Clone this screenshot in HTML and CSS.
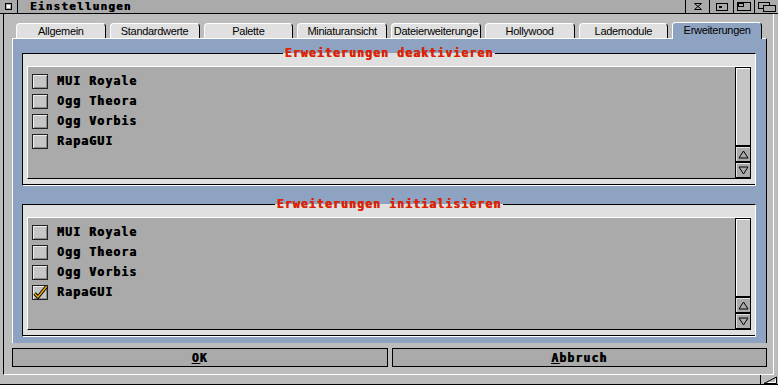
FILE: index.html
```html
<!DOCTYPE html>
<html lang="de">
<head>
    <meta charset="UTF-8">
    <title>Einstellungen</title>
    <link rel="stylesheet" href="styles.css">
</head>
<body>
    <div class="window">
        <div class="titlebar">
            <div class="close-gadget">
                <svg width="8" height="8" viewBox="0 0 8 8"><rect x="0.5" y="0.5" width="6" height="6" fill="#aaa" stroke="#000"/><rect x="2" y="2" width="3" height="3" fill="#fff"/></svg>
            </div>
            <div class="title">Einstellungen</div>
            <div class="gadgets">
                <div class="gadget">
                    <svg width="10" height="9" viewBox="0 0 10 9"><path d="M1.5 1.5 H8.5 L1.5 7.5 H8.5 L1.5 1.5" fill="none" stroke="#000"/></svg>
                </div>
                <div class="gadget">
                    <svg width="12" height="8" viewBox="0 0 12 8"><rect x="0.5" y="0.5" width="11" height="7" fill="none" stroke="#000"/><rect x="3" y="3" width="3" height="2" fill="#000"/></svg>
                </div>
                <div class="gadget narrow">
                    <svg width="14" height="9" viewBox="0 0 14 9"><rect x="0.5" y="0.5" width="13" height="8" fill="none" stroke="#000"/><rect x="1" y="1" width="6" height="4" fill="#000"/><rect x="2" y="2" width="4" height="2" fill="#aaa"/></svg>
                </div>
                <div class="gadget">
                    <svg width="18" height="10" viewBox="0 0 18 10"><rect x="0.5" y="0.5" width="11" height="6" fill="#aaa" stroke="#000"/><rect x="5.5" y="3.5" width="12" height="6" fill="#aaa" stroke="#000"/></svg>
                </div>
            </div>
        </div>

        <div class="main">
            <div class="tabs">
                <div class="tab">Allgemein</div>
                <div class="tab">Standardwerte</div>
                <div class="tab">Palette</div>
                <div class="tab">Miniaturansicht</div>
                <div class="tab">Dateierweiterunge</div>
                <div class="tab">Hollywood</div>
                <div class="tab">Lademodule</div>
                <div class="tab active">Erweiterungen</div>
            </div>

            <div class="panel">
                <fieldset class="group">
                    <legend>Erweiterungen deaktivieren</legend>
                    <div class="list">
                        <div class="items">
                            <div class="item"><span class="check"></span><span class="label">MUI Royale</span></div>
                            <div class="item"><span class="check"></span><span class="label">Ogg Theora</span></div>
                            <div class="item"><span class="check"></span><span class="label">Ogg Vorbis</span></div>
                            <div class="item"><span class="check"></span><span class="label">RapaGUI</span></div>
                        </div>
                        <div class="scrollbar">
                            <div class="knob"></div>
                            <div class="arrow"><svg width="11" height="9" viewBox="0 0 11 9"><path d="M5.5 1 L10 8 H1 Z" fill="none" stroke="#000"/></svg></div>
                            <div class="arrow"><svg width="11" height="9" viewBox="0 0 11 9"><path d="M1 1 H10 L5.5 8 Z" fill="none" stroke="#000"/></svg></div>
                        </div>
                    </div>
                </fieldset>

                <fieldset class="group">
                    <legend>Erweiterungen initialisieren</legend>
                    <div class="list">
                        <div class="items">
                            <div class="item"><span class="check"></span><span class="label">MUI Royale</span></div>
                            <div class="item"><span class="check"></span><span class="label">Ogg Theora</span></div>
                            <div class="item"><span class="check"></span><span class="label">Ogg Vorbis</span></div>
                            <div class="item">
                                <span class="check checked">
                                    <svg width="16" height="15" viewBox="0 0 16 15"><path d="M2.5 8.5 L6 12 L14.5 1.5" fill="none" stroke="#000" stroke-width="3.4"/><path d="M2.5 8.5 L6 12 L14.5 1.5" fill="none" stroke="#f5b400" stroke-width="1.4"/></svg>
                                </span>
                                <span class="label">RapaGUI</span>
                            </div>
                        </div>
                        <div class="scrollbar">
                            <div class="knob"></div>
                            <div class="arrow"><svg width="11" height="9" viewBox="0 0 11 9"><path d="M5.5 1 L10 8 H1 Z" fill="none" stroke="#000"/></svg></div>
                            <div class="arrow"><svg width="11" height="9" viewBox="0 0 11 9"><path d="M1 1 H10 L5.5 8 Z" fill="none" stroke="#000"/></svg></div>
                        </div>
                    </div>
                </fieldset>
            </div>

            <div class="buttons">
                <button class="btn"><u>O</u>K</button>
                <button class="btn"><u>A</u>bbruch</button>
            </div>
        </div>

        <div class="footer">
            <div class="size-gadget">
                <svg width="14" height="8" viewBox="0 0 14 8"><path d="M1 7.5 H13.5 V1 Z" fill="none" stroke="#000"/><path d="M5 6.5 H12.5 V3.5" fill="none" stroke="#fff"/></svg>
            </div>
        </div>
    </div>
</body>
</html>
```

FILE: styles.css
```css
body {
    margin: 0;
    background-color: #bcbcbc;
    font-family: "DejaVu Sans Mono", monospace;
}
.window {
    width: 778px;
    height: 385px;
    display: flex;
    flex-direction: column;
    background-color: #bcbcbc;
    overflow: hidden;
}

/* title bar */
.titlebar {
    height: 13px;
    background-color: #aaaaaa;
    border-bottom: 1px solid #000;
    display: flex;
}
.close-gadget {
    flex: none;
    width: 17px;
    border-right: 1px solid #000;
    display: flex;
    align-items: center;
    justify-content: center;
}
.title {
    flex: none;
    padding-left: 12px;
    font: bold 11px/13px "DejaVu Sans Mono", monospace;
    letter-spacing: 1.2px;
    color: #000;
    text-shadow: 0.4px 0 0 #000;
}
.gadgets {
    margin-left: auto;
    display: flex;
}
.gadget {
    flex: none;
    width: 23px;
    border-left: 1px solid #000;
    display: flex;
    align-items: center;
    justify-content: center;
}
.gadget.narrow {
    width: 20px;
}

/* window content */
.main {
    flex: 1;
    margin: 0 4px 0 3px;
    border-left: 1px solid #000;
    border-right: 1px solid #fff;
    border-bottom: 1px solid #fff;
    padding: 8px 6px 7px 8px;
    display: flex;
    flex-direction: column;
}
.footer {
    height: 9px;
    border-bottom: 1px solid #000;
    display: flex;
    justify-content: flex-end;
}
.size-gadget {
    width: 17px;
    border-left: 1px solid #000;
    display: flex;
    align-items: center;
    justify-content: center;
}

/* register tabs */
.tabs {
    height: 16px;
    margin: 0 5px 0 4px;
    display: flex;
    align-items: flex-end;
    gap: 4px;
}
.tab {
    flex: 1;
    height: 14px;
    background-color: #e0e0e0;
    border: 1px solid #fff;
    border-right-color: #000;
    border-bottom: none;
    border-radius: 4px 4px 0 0;
    font: 11px/14px "Liberation Sans", Arial, sans-serif;
    letter-spacing: -0.3px;
    text-align: center;
    color: #000;
    white-space: nowrap;
    overflow: hidden;
}
.tab.active {
    height: 16px;
    margin-bottom: -1px;
    background-color: #8ea3c1;
    position: relative;
}

.panel {
    flex: 1;
    background-color: #8ea3c1;
    border-top: 1px solid #fff;
    border-left: 1px solid #fff;
    border-right: 1px solid #000;
    padding: 8px 10px 0 9px;
    display: flex;
    flex-direction: column;
    gap: 12px;
}

/* groups */
.group {
    margin: 0;
    padding: 6px 4px;
    min-width: 0;
    border: 1px solid;
    border-color: #000 #fff #fff #000;
    box-shadow: inset 0 -1px #000;
    background-color: #e0e0e0;
}
.group legend {
    margin: 0 auto;
    padding: 0 2px;
    font: bold 11.5px/13px "DejaVu Sans Mono", monospace;
    letter-spacing: 1.1px;
    color: #e02200;
    text-shadow: 0.6px 0 0 #c01c00;
}
.list {
    height: 111px;
    background-color: #aaaaaa;
    border-top: 1px solid #fff;
    border-left: 1px solid #fff;
    border-bottom: 1px solid #000;
    display: flex;
}
.items {
    flex: 1;
    padding: 7px 0 0 4px;
    display: flex;
    flex-direction: column;
    gap: 5px;
}
.item {
    height: 15px;
    display: flex;
    align-items: center;
}
.check {
    width: 14px;
    height: 13px;
    margin-right: 9px;
    border: 1px solid #222;
    background-color: #c6c6c6;
    box-shadow: inset 1px 1px #ededed, inset -1px -1px #8a8a8a;
}
.check svg {
    display: block;
    margin: -1px;
    overflow: visible;
}
.label {
    font: bold 11.5px/15px "DejaVu Sans Mono", monospace;
    letter-spacing: 1.1px;
    color: #000;
    text-shadow: 0.6px 0 0 #000;
}

/* scroller */
.scrollbar {
    width: 16px;
    display: flex;
    flex-direction: column;
}
.knob {
    flex: 1;
    background-color: #c6c6c6;
    border: 1px solid #000;
    box-shadow: inset 1px 1px #fff;
}
.arrow {
    height: 14px;
    border: 1px solid #000;
    background-color: #aaaaaa;
    box-shadow: inset 1px 1px #e0e0e0;
    display: flex;
    align-items: center;
    justify-content: center;
}

/* bottom buttons */
.buttons {
    margin-top: 5px;
    display: flex;
    gap: 4px;
}
.btn {
    flex: 1;
    height: 19px;
    padding: 0;
    border: 1px solid #000;
    background-color: #aaaaaa;
    font: bold 11.5px/18px "DejaVu Sans Mono", monospace;
    letter-spacing: 1.1px;
    color: #000;
    text-shadow: 0.6px 0 0 #000;
}
```
